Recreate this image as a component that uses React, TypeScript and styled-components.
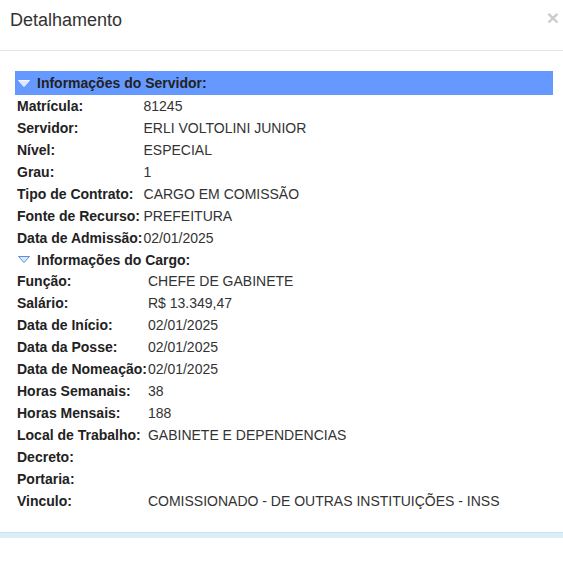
import React from "react";
import styled, { createGlobalStyle } from "styled-components";

const Global = createGlobalStyle`
  html, body { margin: 0; padding: 0; background: #fff; }
  body { font-family: "Liberation Sans", Arial, sans-serif; color: #333; }
`;

const Modal = styled.div`
  width: 563px;
  background: #fff;
`;

const Header = styled.div`
  box-sizing: border-box;
  height: 51px;
  display: flex;
  justify-content: space-between;
  align-items: flex-start;
  padding: 10px 4px 0 10px;
  border-bottom: 1px solid #e5e5e5;
`;

const Title = styled.h4`
  margin: 0;
  font-size: 18px;
  font-weight: normal;
  line-height: 21px;
  color: #333;
`;

const Close = styled.button`
  margin: -3px 0 0 0;
  padding: 0;
  border: 0;
  background: transparent;
  font-family: "Liberation Sans", Arial, sans-serif;
  font-size: 21px;
  font-weight: bold;
  line-height: 21px;
  color: #000;
  opacity: 0.2;
  cursor: pointer;
`;

const Body = styled.div`
  padding: 20px 10px 20px 15px;
`;

const SectionHeader = styled.div<{ $highlight?: boolean }>`
  display: flex;
  align-items: center;
  gap: 7px;
  height: ${(p) => (p.$highlight ? "24px" : "21px")};
  padding-left: 3px;
  background: ${(p) => (p.$highlight ? "#6699ff" : "transparent")};
  font-size: 14px;
  font-weight: bold;
  color: #222;
`;

const Table = styled.table`
  border-collapse: collapse;
  font-size: 14px;
`;

const Row = styled.tr`
  height: 22px;
`;

const Label = styled.td`
  padding: 0 1px 0 2px;
  font-weight: bold;
  color: #222;
  white-space: nowrap;
  vertical-align: middle;
`;

const Value = styled.td`
  padding: 0 0 0 0;
  color: #333;
  white-space: nowrap;
  vertical-align: middle;
`;

const Footer = styled.div`
  height: 5px;
  border-top: 1px solid #c6e4ee;
  background: #d9eef6;
`;

const Arrow = ({ light }: { light?: boolean }) => (
  <svg width="12" height="7" viewBox="0 0 12 7">
    <polygon
      points="0.5,0.5 11.5,0.5 6,6.5"
      fill={light ? "#dfe6ff" : "#dbe7fb"}
      stroke={light ? "#f2f5ff" : "#5b8fd9"}
      strokeWidth="1"
    />
  </svg>
);

type Item = [string, string];

const servidor: Item[] = [
  ["Matrícula:", "81245"],
  ["Servidor:", "ERLI VOLTOLINI JUNIOR"],
  ["Nível:", "ESPECIAL"],
  ["Grau:", "1"],
  ["Tipo de Contrato:", "CARGO EM COMISSÃO"],
  ["Fonte de Recurso:", "PREFEITURA"],
  ["Data de Admissão:", "02/01/2025"],
];

const cargo: Item[] = [
  ["Função:", "CHEFE DE GABINETE"],
  ["Salário:", "R$ 13.349,47"],
  ["Data de Início:", "02/01/2025"],
  ["Data da Posse:", "02/01/2025"],
  ["Data de Nomeação:", "02/01/2025"],
  ["Horas Semanais:", "38"],
  ["Horas Mensais:", "188"],
  ["Local de Trabalho:", "GABINETE E DEPENDENCIAS"],
  ["Decreto:", ""],
  ["Portaria:", ""],
  ["Vinculo:", "COMISSIONADO - DE OUTRAS INSTITUIÇÕES - INSS"],
];

const DataTable = ({ items }: { items: Item[] }) => (
  <Table>
    <tbody>
      {items.map(([l, v]) => (
        <Row key={l}>
          <Label>{l}</Label>
          <Value>{v}</Value>
        </Row>
      ))}
    </tbody>
  </Table>
);

export default function App() {
  return (
    <>
      <Global />
      <Modal>
        <Header>
          <Title>Detalhamento</Title>
          <Close aria-label="Fechar">×</Close>
        </Header>
        <Body>
          <SectionHeader $highlight>
            <Arrow light />
            <span>Informações do Servidor:</span>
          </SectionHeader>
          <DataTable items={servidor} />
          <SectionHeader>
            <Arrow />
            <span>Informações do Cargo:</span>
          </SectionHeader>
          <DataTable items={cargo} />
        </Body>
        <Footer />
      </Modal>
    </>
  );
}
